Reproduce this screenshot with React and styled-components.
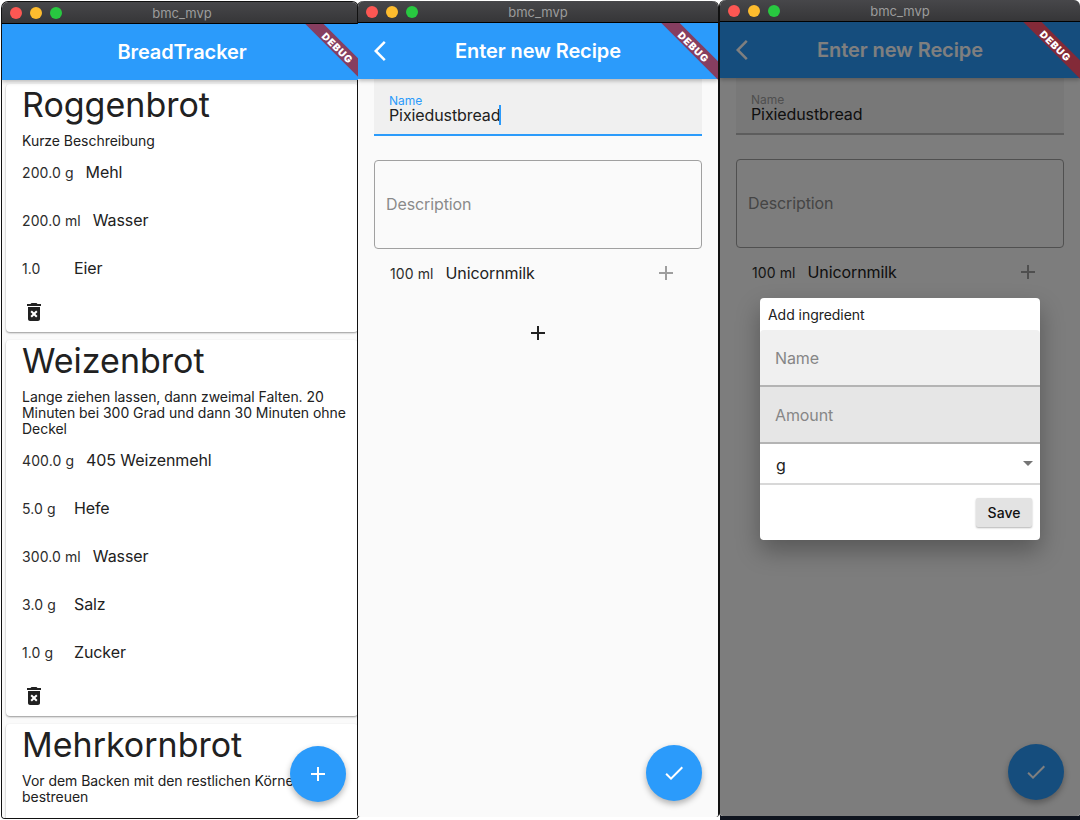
import styled, { createGlobalStyle } from "styled-components";
import { MdAdd, MdArrowBackIos, MdCheck, MdDeleteForever } from "react-icons/md";

const recipes = [
  {
    name: "Roggenbrot",
    description: ["Kurze Beschreibung"],
    ingredients: [
      ["200.0 g", "Mehl"],
      ["200.0 ml", "Wasser"],
      ["1.0", "Eier"],
    ],
  },
  {
    name: "Weizenbrot",
    description: [
      "Lange ziehen lassen, dann zweimal Falten. 20",
      "Minuten bei 300 Grad und dann 30 Minuten ohne",
      "Deckel",
    ],
    ingredients: [
      ["400.0 g", "405 Weizenmehl"],
      ["5.0 g", "Hefe"],
      ["300.0 ml", "Wasser"],
      ["3.0 g", "Salz"],
      ["1.0 g", "Zucker"],
    ],
  },
  {
    name: "Mehrkornbrot",
    description: ["Vor dem Backen mit den restlichen Körnern", "bestreuen"],
    ingredients: [],
  },
];

const GlobalStyle = createGlobalStyle`
  html, body {
    margin: 0;
    padding: 0;
    background: #fff;
  }
  body {
    font-family: Inter, "Liberation Sans", sans-serif;
    color: #212121;
  }
`;

const Desktop = styled.div`
  width: 1080px;
  height: 820px;
  display: flex;
  align-items: flex-start;
  overflow: hidden;
`;

const Window = styled.div`
  position: relative;
  width: ${p => p.$width}px;
  height: 816px;
  margin-left: ${p => p.$left}px;
  margin-top: ${p => p.$top}px;
  flex-shrink: 0;
  display: flex;
  flex-direction: column;
  background: #fafafa;
  border-radius: 6px 6px 3px 3px;
  box-shadow: ${p => p.$edge};
  overflow: hidden;
`;

const TitleBar = styled.div`
  position: relative;
  width: 360px;
  height: 21px;
  flex-shrink: 0;
  display: flex;
  align-items: center;
  justify-content: center;
  background: linear-gradient(#47474a, #363638);
  border-bottom: 1px solid #000;
  color: #9c9c9c;
  font-size: 13px;
`;

const Lights = styled.div`
  position: absolute;
  left: 8px;
  top: 5px;
  display: flex;
  gap: 8px;
`;

const Light = styled.span`
  width: 12px;
  height: 12px;
  border-radius: 50%;
  background: ${p => p.$color};
`;

const Screen = styled.div`
  position: relative;
  width: 360px;
  flex: 1;
  min-height: 0;
  display: flex;
  flex-direction: column;
  overflow: hidden;
`;

const AppBar = styled.header`
  position: relative;
  z-index: 2;
  height: 56px;
  flex-shrink: 0;
  display: flex;
  align-items: center;
  justify-content: center;
  background: #2b9bfb;
  color: #fff;
  font-size: 20px;
  font-weight: 600;
  letter-spacing: -0.1px;
  box-shadow: 0 2px 4px rgba(0, 0, 0, 0.25);
`;

const BackButton = styled.span`
  position: absolute;
  left: 16px;
  top: 16px;
  display: flex;
`;

const Ribbon = styled.div`
  position: absolute;
  z-index: 5;
  top: 17px;
  right: -36px;
  width: 120px;
  height: 13px;
  display: flex;
  align-items: center;
  justify-content: center;
  transform: rotate(45deg);
  background: ${p => (p.$dim ? "#832a38" : "#863e60")};
  color: #fff;
  font-size: 10px;
  font-weight: 900;
  letter-spacing: 0.8px;
`;

const Body = styled.main`
  flex: 1;
  min-height: 0;
  overflow: hidden;
  background: #fafafa;
`;

const RecipeList = styled(Body)`
  padding: 4px 0 0 4px;
  display: flex;
  flex-direction: column;
  gap: 8px;
`;

const Card = styled.article`
  flex-shrink: 0;
  width: 352px;
  min-height: 120px;
  box-sizing: border-box;
  padding: 0 0 0 16px;
  background: #fff;
  border-radius: 4px;
  box-shadow: 0 1px 2px rgba(0, 0, 0, 0.4);
`;

const RecipeName = styled.h1`
  margin: 0;
  height: 48px;
  box-sizing: border-box;
  font-size: 34px;
  font-weight: 400;
  line-height: 41px;
`;

const Description = styled.div`
  margin: 0 0 -1px;
  padding-top: 1px;
  font-size: 14px;
  line-height: 16px;
  letter-spacing: -0.04px;
  white-space: nowrap;
`;

const IngredientRow = styled.div`
  height: 48px;
  display: flex;
  align-items: center;
  padding-left: ${p => p.$inset || 0}px;
`;

const Amount = styled.span`
  min-width: 40px;
  padding-right: 12px;
  font-size: 14px;
  letter-spacing: 0.1px;
  color: #2c2c2c;
`;

const IngredientName = styled.span`
  flex: 1;
  font-size: 16px;
  letter-spacing: -0.1px;
`;

const DeleteRow = styled.div`
  height: 40px;
  display: flex;
  align-items: center;
`;

const RowIcon = styled.span`
  display: flex;
  margin-right: 40px;
  color: #9e9e9e;
`;

const FilledField = styled.div`
  margin: 0 16px;
  height: 57px;
  box-sizing: border-box;
  padding: 16px 15px 0;
  background: #f0f0f0;
  border-bottom: 2px solid ${p => (p.$focused ? "#2b9bfb" : "#bababa")};
`;

const FloatingLabel = styled.div`
  height: 12px;
  color: ${p => (p.$focused ? "#2b9bfb" : "#9e9e9e")};
  font-size: 12px;
  line-height: 12px;
`;

const FieldValue = styled.div`
  display: flex;
  align-items: center;
  height: 16px;
  font-size: 16px;
  line-height: 16px;
  letter-spacing: -0.1px;
`;

const Caret = styled.span`
  width: 2px;
  height: 20px;
  margin-left: -1px;
  background: #2b9bfb;
`;

const OutlinedField = styled.div`
  margin: 24px 16px 0;
  height: 89px;
  box-sizing: border-box;
  padding: 0 11px 2px;
  display: flex;
  align-items: center;
  border: 1px solid #a0a0a0;
  border-radius: 4px;
  color: #8a8a8a;
  font-size: 16px;
  letter-spacing: -0.1px;
`;

const AddButton = styled.div`
  display: flex;
  justify-content: center;
  padding-top: 24px;
  color: #212121;
`;

const Fab = styled.button`
  position: absolute;
  right: 16px;
  bottom: 16px;
  z-index: 3;
  width: 56px;
  height: 56px;
  padding: 0;
  display: flex;
  align-items: center;
  justify-content: center;
  border: none;
  border-radius: 50%;
  background: #2b9bfb;
  color: #fff;
  box-shadow: 0 3px 6px rgba(0, 0, 0, 0.3);
`;

const Overlay = styled.div`
  position: absolute;
  inset: 0;
  z-index: 4;
  display: flex;
  align-items: center;
  justify-content: center;
  background: rgba(0, 0, 0, 0.5);
`;

const Dialog = styled.section`
  width: 280px;
  height: 242px;
  display: flex;
  flex-direction: column;
  background: #fff;
  border-radius: 4px;
  box-shadow: 0 11px 24px rgba(0, 0, 0, 0.3);
`;

const DialogTitle = styled.h2`
  margin: 0;
  height: 32px;
  display: flex;
  align-items: center;
  padding-left: 8px;
  font-size: 14px;
  font-weight: 400;
  letter-spacing: -0.04px;
  color: #212121;
`;

const DialogField = styled.div`
  height: 57px;
  box-sizing: border-box;
  display: flex;
  align-items: center;
  padding-left: 15px;
  background: ${p => p.$bg};
  border-bottom: 2px solid #b4b4b4;
  border-radius: ${p => (p.$first ? "4px 4px 0 0" : "0")};
  color: #868686;
  font-size: 16px;
  letter-spacing: -0.1px;
`;

const Select = styled.div`
  height: 41px;
  box-sizing: border-box;
  display: flex;
  align-items: center;
  justify-content: space-between;
  padding: 2px 7px 0 16px;
  border-bottom: 2px solid #d8d8d8;
  font-size: 16px;
`;

const Arrow = styled.span`
  width: 0;
  height: 0;
  margin-top: -2px;
  border-left: 5px solid transparent;
  border-right: 5px solid transparent;
  border-top: 5px solid #757575;
`;

const DialogActions = styled.div`
  display: flex;
  justify-content: flex-end;
  padding: 13px 8px 0;
`;

const SaveButton = styled.button`
  width: 56px;
  height: 29px;
  padding: 0 0 1px;
  border: none;
  border-radius: 2px;
  background: #e3e3e3;
  color: #111;
  font-family: inherit;
  font-size: 14px;
  font-weight: 500;
  box-shadow: 0 1px 2px rgba(0, 0, 0, 0.3);
`;

const WindowFrame = ({ width = 360, left = 0, top, edge, children }) => (
  <Window $width={width} $left={left} $top={top} $edge={edge}>
    <TitleBar>
      <Lights>
        <Light $color="#fc5753" />
        <Light $color="#fdbc2e" />
        <Light $color="#28c840" />
      </Lights>
      bmc_mvp
    </TitleBar>
    <Screen>{children}</Screen>
  </Window>
);

const RecipeCard = ({ recipe }) => (
  <Card>
    <RecipeName>{recipe.name}</RecipeName>
    <Description>
      {recipe.description.map(line => (
        <div key={line}>{line}</div>
      ))}
    </Description>
    {recipe.ingredients.map(([amount, name]) => (
      <IngredientRow key={name}>
        <Amount>{amount}</Amount>
        <IngredientName>{name}</IngredientName>
      </IngredientRow>
    ))}
    {recipe.ingredients.length > 0 && (
      <DeleteRow>
        <MdDeleteForever size={24} />
      </DeleteRow>
    )}
  </Card>
);

const RecipeForm = ({ focused }) => (
  <Body>
    <FilledField $focused={focused}>
      <FloatingLabel $focused={focused}>Name</FloatingLabel>
      <FieldValue>
        Pixiedustbread
        {focused && <Caret />}
      </FieldValue>
    </FilledField>
    <OutlinedField>Description</OutlinedField>
    <IngredientRow $inset={32}>
      <Amount>100 ml</Amount>
      <IngredientName>Unicornmilk</IngredientName>
      <RowIcon>
        <MdAdd size={24} />
      </RowIcon>
    </IngredientRow>
    <AddButton>
      <MdAdd size={24} />
    </AddButton>
  </Body>
);

const EditAppBar = () => (
  <AppBar>
    <BackButton>
      <MdArrowBackIos size={24} />
    </BackButton>
    Enter new Recipe
  </AppBar>
);

const App = () => {
  return (
    <>
      <GlobalStyle />
      <Desktop>
        <WindowFrame width={356} left={2} top={2} edge="0 0 0 1px #111">
          <AppBar>BreadTracker</AppBar>
          <Ribbon>DEBUG</Ribbon>
          <RecipeList>
            {recipes.map(recipe => (
              <RecipeCard key={recipe.name} recipe={recipe} />
            ))}
          </RecipeList>
          <Fab>
            <MdAdd size={24} />
          </Fab>
        </WindowFrame>

        <WindowFrame top={1} edge="-1px 0 0 #111, 1px 0 0 #111">
          <EditAppBar />
          <Ribbon>DEBUG</Ribbon>
          <RecipeForm focused />
          <Fab>
            <MdCheck size={24} />
          </Fab>
        </WindowFrame>

        <WindowFrame left={2} top={0} edge="-1px 0 0 #111, 0 8px 0 #10151f">
          <EditAppBar />
          <Ribbon $dim>DEBUG</Ribbon>
          <RecipeForm />
          <Fab>
            <MdCheck size={24} />
          </Fab>
          <Overlay>
            <Dialog>
              <DialogTitle>Add ingredient</DialogTitle>
              <DialogField $bg="#f0f0f0" $first>
                Name
              </DialogField>
              <DialogField $bg="#e6e6e6">Amount</DialogField>
              <Select>
                g
                <Arrow />
              </Select>
              <DialogActions>
                <SaveButton>Save</SaveButton>
              </DialogActions>
            </Dialog>
          </Overlay>
        </WindowFrame>
      </Desktop>
    </>
  );
};

export default App;
